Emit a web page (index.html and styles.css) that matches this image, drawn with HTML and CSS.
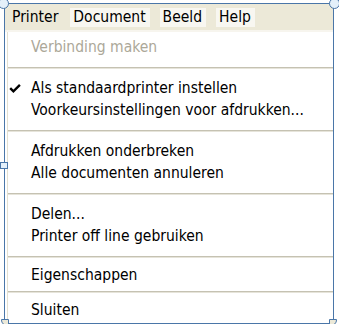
FILE: index.html
```html
<!DOCTYPE html>
<html>
<head>
<meta charset="utf-8">
<link rel="stylesheet" href="styles.css">
</head>
<body>
<div class="frame">
  <div class="menubar">
    <span class="mb-item open">Printer</span>
    <span class="mb-item mb-doc">Document</span>
    <span class="mb-item mb-view">Beeld</span>
    <span class="mb-item mb-help">Help</span>
  </div>
  <div class="menu">
    <div class="item disabled">Verbinding maken</div>
    <div class="sep"></div>
    <div class="item checked"><span class="check"><svg width="12" height="9" viewBox="0 0 12 9"><path d="M1.2 4.2 L4.4 7.3 L10.9 0.9" fill="none" stroke="#000" stroke-width="2.4"/></svg></span>Als standaardprinter instellen</div>
    <div class="item">Voorkeursinstellingen voor afdrukken...</div>
    <div class="sep"></div>
    <div class="item">Afdrukken onderbreken</div>
    <div class="item">Alle documenten annuleren</div>
    <div class="sep"></div>
    <div class="item">Delen...</div>
    <div class="item">Printer off line gebruiken</div>
    <div class="sep sep-tight-after"></div>
    <div class="item">Eigenschappen</div>
    <div class="sep sep-tight"></div>
    <div class="item">Sluiten</div>
  </div>
  <span class="handle h-tl"></span>
  <span class="handle h-tr"></span>
  <span class="handle sq h-ml"></span>
  <span class="handle corner h-bl"></span>
  <span class="handle corner h-br"></span>
</div>
</body>
</html>
```
FILE: styles.css
```css
html, body {
  margin: 0;
  padding: 0;
  background: #ffffff;
}
body {
  font-family: "DejaVu Sans Condensed", "DejaVu Sans", sans-serif;
  font-size: 15.5px;
  color: #000;
}
.frame {
  position: relative;
  margin: 3px 5px 0 4px;
  height: 319px;
  border: 1px solid #4a76a8;
  background: #ffffff;
  display: flex;
  flex-direction: column;
}
.menubar {
  height: 26px;
  background: #ece9d8;
  display: flex;
  align-items: center;
  padding-left: 2px;
  border-bottom: 2px solid #f7f5ee;
}
.mb-item {
  padding: 0 4px 0 3px;
  line-height: 19px;
  background: #f8f7f1;
}
.mb-item.open {
  background: transparent;
  padding-left: 5px;
}
.mb-doc { margin-left: 8px; }
.mb-view { margin-left: 10px; }
.mb-help { margin-left: 10px; }
.menu {
  flex: 1;
  margin-left: 2px;
  border-left: 1px solid #e3e0d0;
  background: #fff;
  display: flex;
  flex-direction: column;
  padding-top: 4px;
}
.item {
  height: 22px;
  line-height: 22px;
  padding-left: 23px;
  position: relative;
  white-space: nowrap;
}
.item.disabled {
  color: #aca899;
}
.check {
  position: absolute;
  left: 1px;
  top: 7px;
  line-height: 0;
}
.sep {
  height: 1px;
  background: #c5c2b2;
  border-bottom: 1px solid #e6e4da;
  margin: 9px 0 8px 0;
}
.sep-tight-after {
  margin-bottom: 6px;
}
.sep-tight {
  margin: 5px 0 6px 0;
}
.handle {
  position: absolute;
  width: 9px;
  height: 9px;
  border-radius: 50%;
  background: #e4f0fa;
  border: 1px solid #4a76a8;
}
.h-tl { left: -7px; top: -6px; }
.h-tr { right: -7px; top: -6px; }
.h-ml {
  left: -5px;
  top: 158px;
  border-radius: 0;
  width: 6px;
  height: 5px;
}
.corner {
  width: 6px;
  height: 5px;
  border-radius: 0 0 0 6px;
  background: #ece9d8;
}
.h-bl { left: -4px; bottom: -3px; }
.h-br { right: -4px; bottom: -3px; border-radius: 0 0 6px 0; }
```
